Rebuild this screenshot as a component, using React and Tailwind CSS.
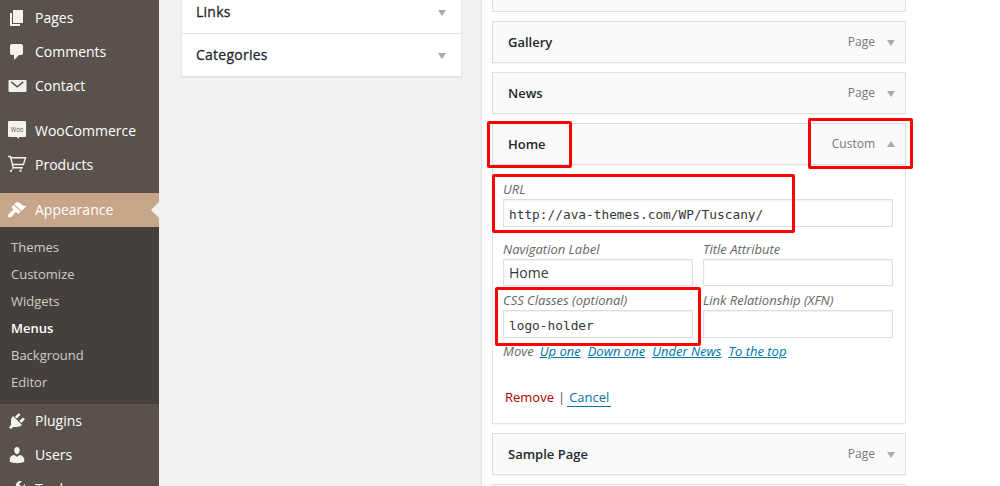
import React from "react";

const ICON_PATHS = {
  pages: "M6 15V2h10v13H6zm-1 1h8v2H3V5h2v11z",
  comments: "M5 2h9c1.1 0 2 .9 2 2v7c0 1.1-.9 2-2 2h-2l-5 5v-5H5c-1.1 0-2-.9-2-2V4c0-1.1.9-2 2-2z",
  appearance:
    "M14.48 11.06L7.41 3.99l1.5-1.5c.5-.56 2.3-.47 3.51.32 1.21.8 1.43 1.28 2.91 2.1 1.18.64 2.45 1.26 4.45.85zm-.71.71L6.7 4.7 4.93 6.47c-.39.39-.39 1.02 0 1.41l1.06 1.06c.39.39.39 1.03 0 1.42-.6.6-1.43 1.11-2.21 1.69-.35.26-.7.53-1.01.84C1.43 14.23.4 16.08 1.4 17.07c.99 1 2.84-.03 4.18-1.36.31-.31.58-.66.85-1.02.57-.78 1.08-1.61 1.69-2.21.39-.39 1.02-.39 1.41 0l1.06 1.06c.39.39 1.02.39 1.41 0z",
  plugins:
    "M13.11 4.36L9.87 7.6 8 5.73l3.24-3.24c.35-.34 1.05-.2 1.56.32.52.51.66 1.21.31 1.55zm-8 1.77l.91-1.12 9.01 9.01-1.19.84c-.71.71-2.63 1.16-3.82 1.16H6.14L4.9 17.26c-.59.59-1.54.59-2.12 0-.59-.58-.59-1.53 0-2.12l1.24-1.24v-3.88c0-1.13.4-3.19 1.09-3.89zm7.26 3.97l3.24-3.24c.34-.35 1.04-.21 1.55.31.52.51.66 1.21.31 1.55l-3.24 3.25z",
  users:
    "M10 9.25c-2.27 0-2.73-3.44-2.73-3.44C7 4.02 7.82 2 9.97 2c2.16 0 2.98 2.02 2.71 3.81 0 0-.41 3.44-2.68 3.44zm0 2.57L12.72 10c2.39 0 4.52 2.33 4.52 4.53v2.49s-3.65 1.13-7.24 1.13c-3.65 0-7.24-1.13-7.24-1.13v-2.49c0-2.25 1.94-4.48 4.47-4.48z",
  tools:
    "M16.68 9.77c-1.34 1.34-3.3 1.67-4.95.99l-5.41 6.52c-.99.99-2.59.99-3.58 0s-.99-2.59 0-3.57l6.52-5.42c-.68-1.65-.35-3.61.99-4.95 1.28-1.28 3.12-1.62 4.72-1.06l-2.89 2.89 2.82 2.82 2.86-2.87c.53 1.58.18 3.39-1.08 4.65z",
};

function MenuIcon({ name }) {
  return (
    <svg viewBox="0 0 20 20" className="ml-[7px] mr-2 h-5 w-5 shrink-0 fill-current">
      {ICON_PATHS[name] && <path d={ICON_PATHS[name]} />}
      {name === "contact" && (
        <>
          <rect x="1.5" y="4" width="18" height="12" rx="1.2" />
          <path d="M4.200 5.900l6 5 6-5" fill="none" stroke="#59524c" strokeWidth="1.400" />
        </>
      )}
      {name === "woo" && (
        <>
          <path d="M2.300 0h15.400c.7 0 1.300.6 1.300 1.300v13.400c0 .7-.6 1.300-1.300 1.300h-5.700l-.2 2L9.600 16H2.300C1.600 16 1 15.400 1 14.700V1.300C1 .6 1.600 0 2.300 0z" />
          <text x="3.800" y="10.500" textLength="12.600" lengthAdjust="spacingAndGlyphs" fontSize="8" fontFamily="Open Sans, sans-serif" fill="#59524c">
            Woo
          </text>
        </>
      )}
      {name === "products" && (
        <g fill="none" stroke="currentColor" strokeWidth="1.400">
          <path d="M1 1.500h2.500l2.700 11.200h9.600M3.900 2.800h14.600l-2.100 6.700H5.400" />
          <circle cx="4" cy="16" r="1.100" fill="currentColor" stroke="none" />
          <circle cx="13.400" cy="16" r="1.100" fill="currentColor" stroke="none" />
          <path d="M6.200 12.700L4.300 15.500M14.800 12.700l-1.200 2.800" strokeWidth=".8" />
        </g>
      )}
    </svg>
  );
}

function MenuItem({ icon, label, active = false }) {
  return (
    <div
      className={
        active
          ? "flex h-[34px] shrink-0 items-center bg-[#c7a589] text-sm text-white"
          : "flex h-[34px] shrink-0 items-center text-sm text-white"
      }
    >
      <span className={active ? "text-white" : "text-[#f3f2f1]"}>
        <MenuIcon name={icon} />
      </span>
      <span className="flex-1">{label}</span>
      {active && (
        <svg viewBox="0 0 8 16" className="h-4 w-2 fill-[#f1f1f1]">
          <path d="M8 0v16L0 8z" />
        </svg>
      )}
    </div>
  );
}

const SUBMENU = ["Themes", "Customize", "Widgets", "Menus", "Background", "Editor"];

function Sidebar() {
  return (
    <nav className="flex w-[159px] shrink-0 flex-col bg-[#59524c] pt-px">
      <MenuItem icon="pages" label="Pages" />
      <MenuItem icon="comments" label="Comments" />
      <MenuItem icon="contact" label="Contact" />
      <div className="h-[11px] shrink-0" />
      <MenuItem icon="woo" label="WooCommerce" />
      <MenuItem icon="products" label="Products" />
      <div className="h-[11px] shrink-0" />
      <MenuItem icon="appearance" label="Appearance" active />
      <ul className="shrink-0 bg-[#46403c] pb-2 pl-[11px] pt-[7px] text-[13px] leading-[27px] text-[#cdcbc9]">
        {SUBMENU.map((label) => (
          <li key={label} className={label === "Menus" ? "font-semibold text-white" : ""}>
            {label}
          </li>
        ))}
      </ul>
      <MenuItem icon="plugins" label="Plugins" />
      <MenuItem icon="users" label="Users" />
      <MenuItem icon="tools" label="Tools" />
    </nav>
  );
}

function Arrow({ up = false }) {
  return (
    <svg viewBox="0 0 8 6" className={up ? "h-1.5 w-2 shrink-0 fill-[#aaaaaa]" : "mt-0.5 h-1.5 w-2 shrink-0 fill-[#aaaaaa]"}>
      <path d={up ? "M0 6L4 0l4 6z" : "M0 0h8L4 6z"} />
    </svg>
  );
}

function AccordionRow({ label }) {
  return (
    <div className="flex h-[43px] shrink-0 items-center justify-between border-b border-[#e1e1e1] pl-3.5 pr-[15px] text-sm tracking-[0.25px] text-[#23282d]">
      <span className="[-webkit-text-stroke:0.3px_#23282d]">{label}</span>
      <Arrow />
    </div>
  );
}

function ItemBar({ label, type, open = false }) {
  return (
    <div className="flex h-[42px] shrink-0 items-center border border-[#dfdfdf] bg-[#fafafa] pl-[15px] pr-2.5 shadow-[0_1px_1px_rgba(0,0,0,0.04)]">
      <span className="flex-1 pt-0.5 text-[13px] font-semibold text-[#23282d]">{label}</span>
      <span className="mr-3 text-xs text-[#777777]">{type}</span>
      <Arrow up={open} />
    </div>
  );
}

function Field({ label, value = "", mono = false, short = false }) {
  return (
    <label className="flex flex-1 flex-col text-[13px] italic leading-[19px] text-[#666666]">
      {label}
      <input
        readOnly
        value={value}
        className={
          (short ? "h-[27px] " : "h-7 ") +
          (mono ? "pt-[3px] font-['DejaVu_Sans_Mono',monospace] text-[12.8px] " : "font-['Open_Sans',sans-serif] text-sm ") +
          "w-full border border-[#dddddd] bg-white px-[5px] not-italic text-[#32373c] shadow-[inset_0_1px_2px_rgba(0,0,0,0.07)] outline-none"
        }
      />
    </label>
  );
}

function ItemSettings() {
  return (
    <div className="flex h-[259px] shrink-0 flex-col border border-t-0 border-[#e5e5e5] pl-2.5 pr-3 pt-[15px] shadow-[0_1px_1px_rgba(0,0,0,0.04)]">
      <div className="flex h-[60px]">
        <Field label="URL" value="http://ava-themes.com/WP/Tuscany/" mono />
      </div>
      <div className="flex h-[51px] gap-2.5">
        <Field label="Navigation Label" value="Home" short />
        <Field label="Title Attribute" short />
      </div>
      <div className="flex h-[51px] gap-2.5">
        <Field label="CSS Classes (optional)" value="logo-holder" mono />
        <Field label="Link Relationship (XFN)" />
      </div>
      <div className="flex text-[13px] italic leading-[19px] text-[#0074a2]">
        <span className="mr-1.5 text-[#666666]">Move</span>
        <span className="mr-[7px] underline">Up one</span>
        <span className="mr-[7px] underline">Down one</span>
        <span className="mr-[7px] underline">Under News</span>
        <span className="underline">To the top</span>
      </div>
      <div className="mt-[27px] flex pl-0.5 text-[13px] leading-[18px]">
        <span className="text-[#aa0000]">Remove</span>
        <span className="ml-1 mr-0.5 text-[#555555]">|</span>
        <span className="border-b border-[#0074a2] px-0.5 text-[#0074a2]">Cancel</span>
      </div>
    </div>
  );
}

const HIGHLIGHTS = [
  "left-[487px] top-[121px] h-[47px] w-[85px]",
  "left-[808px] top-[118px] h-[51px] w-[105px]",
  "left-[492px] top-[174px] h-[59px] w-[303px]",
  "left-[495px] top-[287px] h-[59px] w-[206px]",
];

export default function App() {
  return (
    <div className="relative flex h-[486px] w-[1000px] overflow-hidden bg-[#f1f1f1] font-['Open_Sans',sans-serif]">
      <Sidebar />
      <div className="ml-[22px] flex h-[77px] w-[281px] shrink-0 flex-col justify-end overflow-visible border-x border-[#e5e5e5] bg-white shadow-[0_1px_1px_rgba(0,0,0,0.04)]">
        <AccordionRow label="Links" />
        <AccordionRow label="Categories" />
      </div>
      <main className="ml-[19px] flex flex-1 flex-col border-l border-[#e5e5e5] bg-white pl-2.5">
        <div className="flex w-[414px] flex-col">
          <div className="h-3 shrink-0 border border-t-0 border-[#dfdfdf] bg-[#fafafa]" />
          <div className="mt-[9px] flex flex-col gap-[9px]">
            <ItemBar label="Gallery" type="Page" />
            <ItemBar label="News" type="Page" />
            <div className="flex flex-col">
              <ItemBar label="Home" type="Custom" open />
              <ItemSettings />
            </div>
            <ItemBar label="Sample Page" type="Page" />
            <ItemBar label="" type="" />
          </div>
        </div>
      </main>
      {HIGHLIGHTS.map((box) => (
        <div key={box} className={"absolute rounded-[2px] border-[3px] border-[#ff0000] " + box} />
      ))}
    </div>
  );
}
